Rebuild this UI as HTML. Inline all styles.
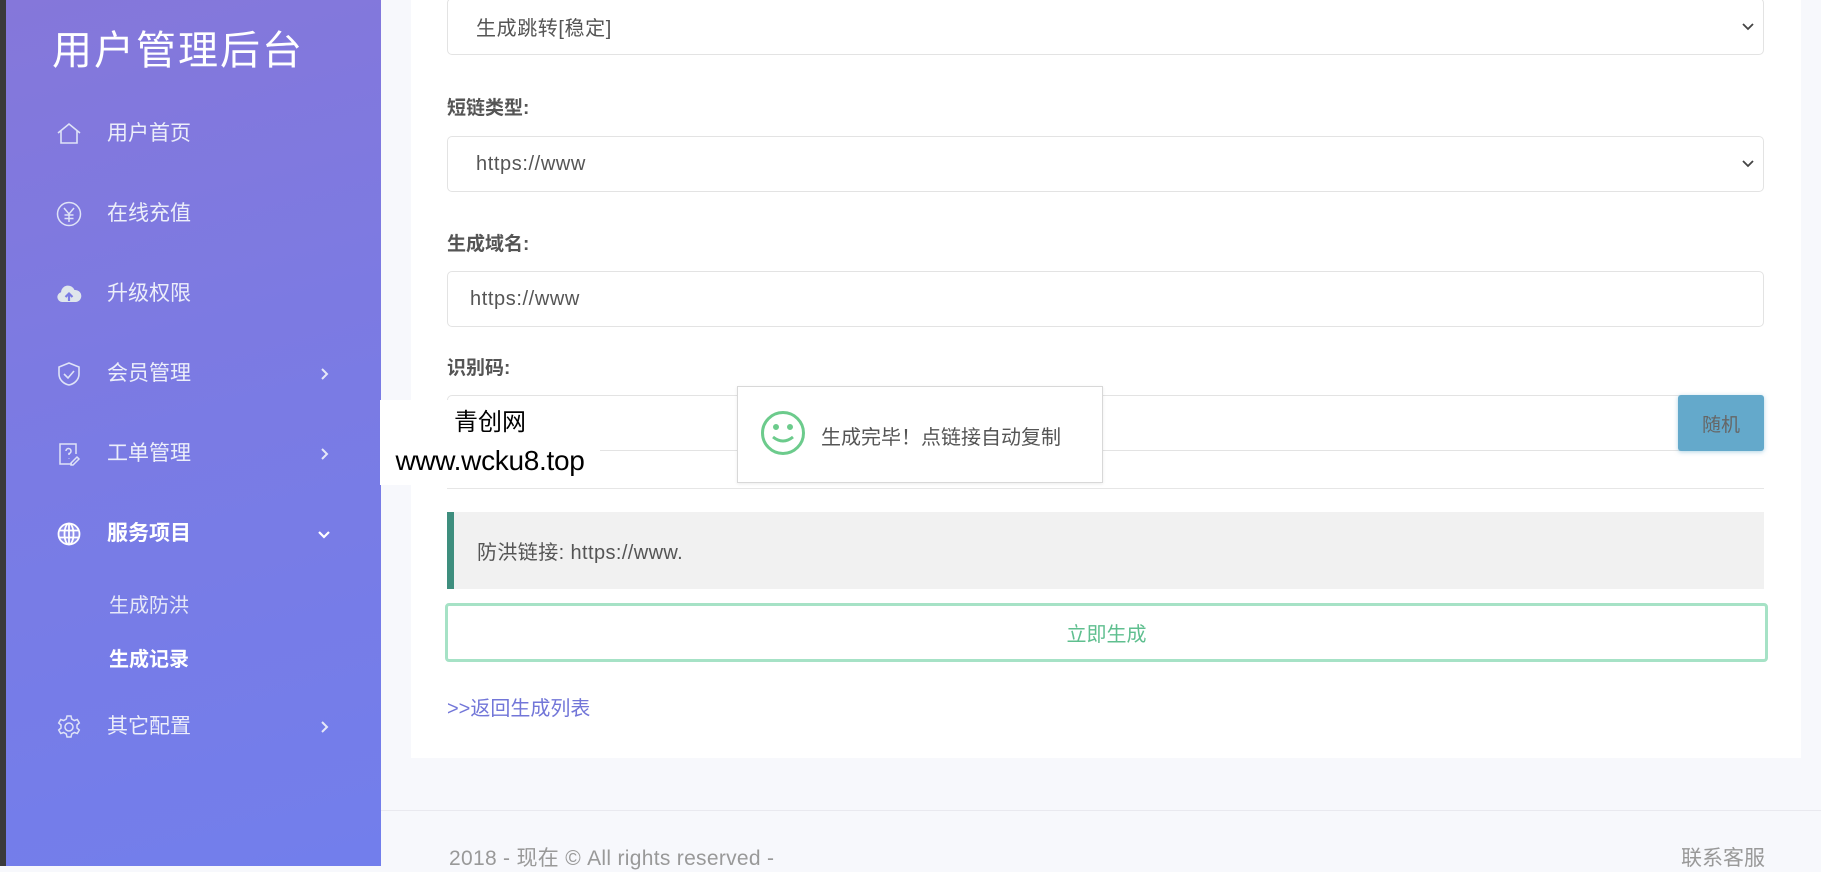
<!DOCTYPE html>
<html><head><meta charset="utf-8"><style>
*{box-sizing:border-box;margin:0;padding:0}
body{width:1821px;height:866px;overflow:hidden;background:#f7f8fc;font-family:"Liberation Sans","Noto Sans CJK SC",sans-serif;position:relative;color:#555}
.dark{position:absolute;left:0;top:0;width:6px;height:866px;background:#3a3a3a}
.side{position:absolute;left:6px;top:0;width:375px;height:866px;background:linear-gradient(165deg,#8577da 0%,#7a7be4 50%,#727eec 100%)}
.title{position:absolute;left:46px;top:18px;font-size:40px;color:#fff;letter-spacing:2px}
.mi{position:absolute;left:101px;font-size:21px;color:#eceefa;line-height:28px}
.ic{position:absolute;left:50px;width:26px;height:26px}
.chev{position:absolute;left:312px;width:12px;height:12px}
.sub{position:absolute;left:103px;font-size:20px;color:#e6e8f8}
.card{position:absolute;left:411px;top:0;width:1390px;height:758px;background:#fff}
.lbl{position:absolute;left:447px;font-size:19px;color:#555;font-weight:bold}
.fc{position:absolute;left:447px;width:1317px;border:1px solid #e3e3e3;border-radius:5px;background:#fff;font-size:20px;letter-spacing:.6px;color:#555;padding-left:28px;display:flex;align-items:center}
.arr{position:absolute;right:8px;top:50%;margin-top:-6px}
</style></head><body>
<div class="dark"></div>
<div class="side">
<div class="title">用户管理后台</div>
<svg class="ic" style="top:121px" viewBox="0 0 26 26" fill="none" stroke="#dfe3f7" stroke-width="1.6"><path d="M2 12L13 3l11 9M5 10v12h16V10"/></svg>
<div class="mi" style="top:120px">用户首页</div>
<svg class="ic" style="top:201px" viewBox="0 0 26 26" fill="none" stroke="#dfe3f7" stroke-width="1.5"><circle cx="13" cy="13" r="11.5"/><path d="M8 7l5 6 5-6M13 13v8M8.5 14h9M8.5 17.5h9"/></svg>
<div class="mi" style="top:200px">在线充值</div>
<svg class="ic" style="top:281px" viewBox="0 0 26 26"><path d="M6 21a5 5 0 0 1-1-9.8A7 7 0 0 1 18.5 9 5.5 5.5 0 0 1 20 21z" fill="#dfe6ec"/><path d="M13 20v-7M9.5 16l3.5-3.5 3.5 3.5" stroke="#7a7be4" stroke-width="2.2" fill="none"/></svg>
<div class="mi" style="top:280px">升级权限</div>
<svg class="ic" style="top:361px" viewBox="0 0 26 26" fill="none" stroke="#dfe3f7" stroke-width="1.6"><path d="M13 2l10 4v7c0 6-5 10-10 11C8 23 3 19 3 13V6z"/><path d="M8 13l4 4 6-7"/></svg>
<div class="mi" style="top:360px">会员管理</div>
<svg class="chev" style="top:368px" viewBox="0 0 12 12" fill="none" stroke="#e6e8f8" stroke-width="2"><path d="M4 1l5 5-5 5"/></svg>
<svg class="ic" style="top:441px" viewBox="0 0 26 26" fill="none" stroke="#dfe3f7" stroke-width="1.5"><path d="M16 23H4V3h16v10"/><path d="M10 10a2.5 2.5 0 1 1 3 2.5V14M13 17v.5M15 22l6-6 2 2-6 6h-2z"/></svg>
<div class="mi" style="top:440px">工单管理</div>
<svg class="chev" style="top:448px" viewBox="0 0 12 12" fill="none" stroke="#e6e8f8" stroke-width="2"><path d="M4 1l5 5-5 5"/></svg>
<svg class="ic" style="top:521px" viewBox="0 0 26 26" fill="none" stroke="#fff" stroke-width="1.8"><circle cx="13" cy="13" r="10.5" fill="#fff" fill-opacity=".15"/><ellipse cx="13" cy="13" rx="4.5" ry="10.5"/><path d="M3 9.5h20M3 16.5h20M13 2.5v21"/></svg>
<div class="mi" style="top:520px;color:#fff;font-weight:bold">服务项目</div>
<svg class="chev" style="top:528px" viewBox="0 0 12 12" fill="none" stroke="#fff" stroke-width="2.2"><path d="M1 4l5 5 5-5"/></svg>
<div class="sub" style="top:589px">生成防洪</div>
<div class="sub" style="top:643px;color:#fff;font-weight:bold">生成记录</div>
<svg class="ic" style="top:714px" viewBox="0 0 26 26" fill="none" stroke="#dfe3f7" stroke-width="1.5"><circle cx="13" cy="13" r="4"/><path d="M11 2h4l.7 3 2.6 1.5 3-1 2 3.5-2.3 2v3l2.3 2-2 3.5-3-1-2.6 1.5-.7 3h-4l-.7-3-2.6-1.5-3 1-2-3.5 2.3-2v-3l-2.3-2 2-3.5 3 1L10.3 5z"/></svg>
<div class="mi" style="top:713px">其它配置</div>
<svg class="chev" style="top:721px" viewBox="0 0 12 12" fill="none" stroke="#e6e8f8" stroke-width="2"><path d="M4 1l5 5-5 5"/></svg>
</div>
<div class="card"></div>
<div class="fc" style="top:-2px;height:57px">生成跳转[稳定]<svg class="arr" width="14" height="12" viewBox="0 0 14 12" fill="none" stroke="#444" stroke-width="1.8"><path d="M2 3l5 5 5-5"/></svg></div>
<div class="lbl" style="top:93px">短链类型:</div>
<div class="fc" style="top:136px;height:56px">https://www<svg class="arr" width="14" height="12" viewBox="0 0 14 12" fill="none" stroke="#444" stroke-width="1.8"><path d="M2 3l5 5 5-5"/></svg></div>
<div class="lbl" style="top:229px">生成域名:</div>
<div class="fc" style="top:271px;height:56px;padding-left:22px">https://www</div>
<div class="lbl" style="top:353px">识别码:</div>
<div class="fc" style="top:395px;height:56px;width:1240px"></div>
<div style="position:absolute;left:1678px;top:395px;width:86px;height:56px;background:#64a9cb;border-radius:3px;color:#666;font-size:19px;display:flex;align-items:center;justify-content:center;box-shadow:0 1px 4px rgba(100,169,203,.5)">随机</div>
<div style="position:absolute;left:447px;top:488px;width:1317px;height:1px;background:#e6e6e6"></div>
<div style="position:absolute;left:447px;top:512px;width:1317px;height:77px;background:#f1f1f1;border-left:7px solid #3e8e7e;font-size:20px;letter-spacing:.4px;color:#555;padding-left:23px;display:flex;align-items:center">防洪链接: https://www.</div>
<div style="position:absolute;left:445px;top:603px;width:1323px;height:59px;border:3px solid #a6e2c6;border-radius:4px;background:#fff;display:flex;align-items:center;justify-content:center;font-size:20px;color:#5fbf8f">立即生成</div>
<div style="position:absolute;left:447px;top:692px;font-size:20px;color:#7276d8">&gt;&gt;返回生成列表</div>
<div style="position:absolute;left:381px;top:810px;width:1440px;height:1px;background:#e9e9ef"></div>
<div style="position:absolute;left:449px;top:842px;font-size:21px;color:#999;letter-spacing:.3px">2018 - 现在 © All rights reserved -</div>
<div style="position:absolute;left:1681px;top:842px;font-size:21px;color:#999">联系客服</div>
<div style="position:absolute;left:380px;top:400px;width:220px;height:85px;background:#fff;text-align:center;color:#000;font-size:24px;line-height:38px;padding-top:4px">青创网<br><span style="font-size:28px;letter-spacing:-.3px">www.wcku8.top</span></div>
<div style="position:absolute;left:737px;top:386px;width:366px;height:97px;background:#fff;border:1px solid #d8d8d8;box-shadow:0 1px 3px rgba(0,0,0,.08)">
<svg style="position:absolute;left:22px;top:23px" width="46" height="46" viewBox="0 0 46 46" fill="none" stroke="#6ccb8c" stroke-width="3"><circle cx="23" cy="23" r="20.5"/><circle cx="16" cy="17" r="1.5" fill="#6ccb8c"/><circle cx="30" cy="17" r="1.5" fill="#6ccb8c"/><path d="M13 27q10 8 20 0"/></svg>
<div style="position:absolute;left:83px;top:34px;font-size:20px;color:#555">生成完毕！点链接自动复制</div>
</div>
</body></html>
